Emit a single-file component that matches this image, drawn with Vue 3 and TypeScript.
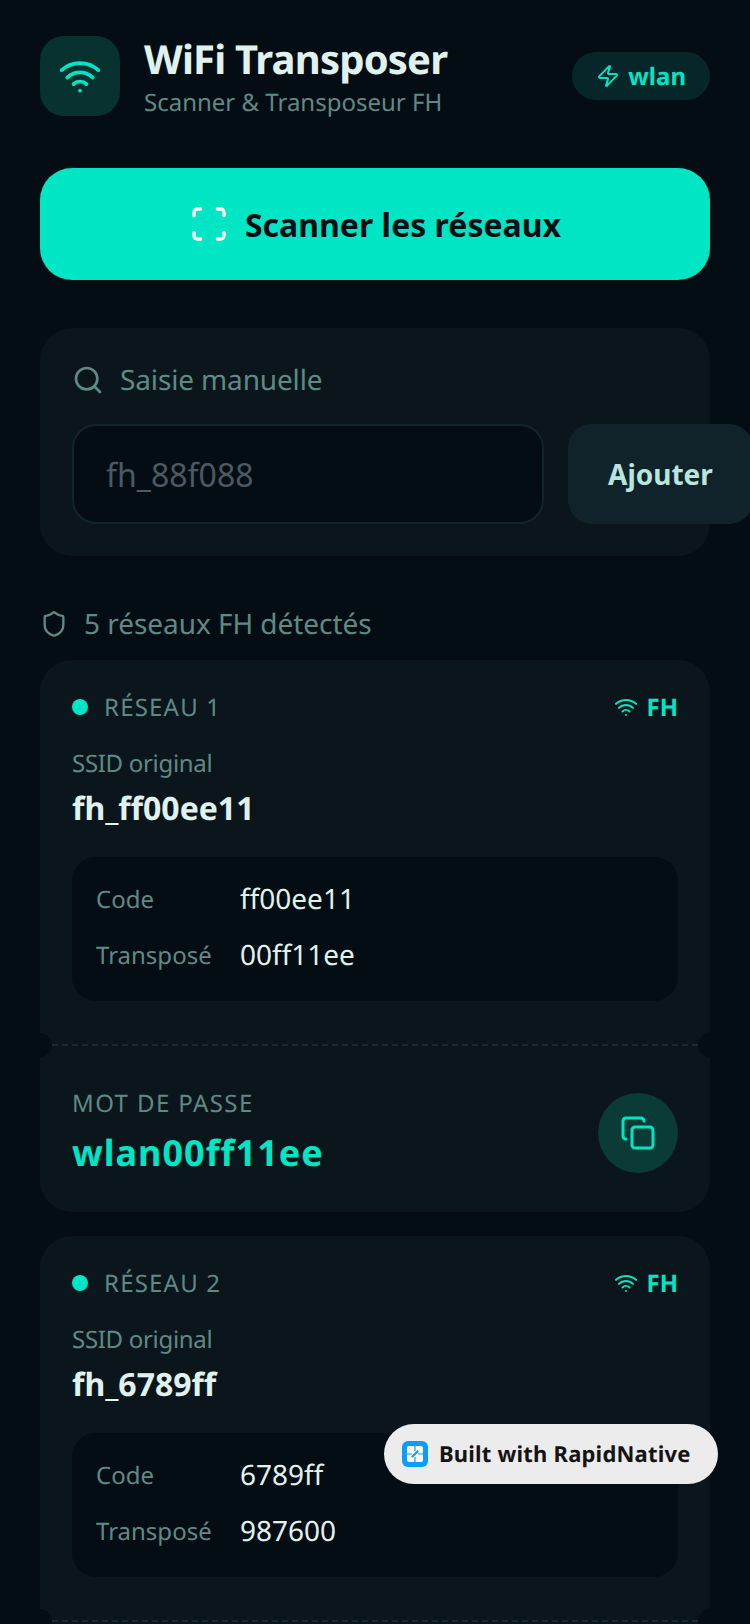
<template>
    <div class="screen">
        <header class="header">
            <div class="logo">
                <svg width="44" height="44" viewBox="0 0 24 24" fill="none" stroke="#00e5c3" stroke-width="2" stroke-linecap="round" stroke-linejoin="round">
                    <path d="M2 8.82a15 15 0 0 1 20 0" />
                    <path d="M5 12.86a10 10 0 0 1 14 0" />
                    <path d="M8.5 16.43a5 5 0 0 1 7 0" />
                    <path d="M12 20h.01" />
                </svg>
            </div>
            <div class="heading">
                <h1 class="title">WiFi Transposer</h1>
                <div class="subtitle">Scanner &amp; Transposeur FH</div>
            </div>
            <div class="prefix-badge">
                <svg width="24" height="24" viewBox="0 0 24 24" fill="none" stroke="#00e5c3" stroke-width="2" stroke-linecap="round" stroke-linejoin="round">
                    <path d="M4 14a1 1 0 0 1-.78-1.63l9.9-10.2a.5.5 0 0 1 .86.46l-1.92 6.02A1 1 0 0 0 13 10h7a1 1 0 0 1 .78 1.63l-9.9 10.2a.5.5 0 0 1-.86-.46l1.92-6.02A1 1 0 0 0 11 14z" />
                </svg>
                <span>wlan</span>
            </div>
        </header>

        <button class="scan-button">
            <svg width="40" height="40" viewBox="0 0 24 24" fill="none" stroke="#ffffff" stroke-width="2" stroke-linecap="round" stroke-linejoin="round">
                <path d="M3 7V5a2 2 0 0 1 2-2h2" />
                <path d="M17 3h2a2 2 0 0 1 2 2v2" />
                <path d="M21 17v2a2 2 0 0 1-2 2h-2" />
                <path d="M7 21H5a2 2 0 0 1-2-2v-2" />
            </svg>
            <span>Scanner les réseaux</span>
        </button>

        <section class="manual">
            <div class="manual-label">
                <svg width="32" height="32" viewBox="0 0 24 24" fill="none" stroke="#5f8a84" stroke-width="2" stroke-linecap="round" stroke-linejoin="round">
                    <path d="m21 21-4.34-4.34" />
                    <circle cx="11" cy="11" r="8" />
                </svg>
                <span>Saisie manuelle</span>
            </div>
            <div class="manual-row">
                <input class="manual-input" placeholder="fh_88f088" />
                <button class="add-button">Ajouter</button>
            </div>
        </section>

        <div class="detected">
            <svg width="28" height="28" viewBox="0 0 24 24" fill="none" stroke="#5f8a84" stroke-width="2" stroke-linecap="round" stroke-linejoin="round">
                <path d="M20 13c0 5-3.5 7.5-7.66 8.95a1 1 0 0 1-.67-.01C7.5 20.5 4 18 4 13V6a1 1 0 0 1 1-1c2 0 4.5-1.2 6.24-2.72a1.17 1.17 0 0 1 1.52 0C14.51 3.81 17 5 19 5a1 1 0 0 1 1 1z" />
            </svg>
            <span>5 réseaux FH détectés</span>
        </div>

        <article v-for="(network, index) in networks" :key="network.code" class="network">
            <div class="network-top">
                <div class="network-head">
                    <span class="dot"></span>
                    <span class="network-name">RÉSEAU {{ index + 1 }}</span>
                    <span class="fh-tag">
                        <svg width="24" height="24" viewBox="0 0 24 24" fill="none" stroke="#00e5c3" stroke-width="2" stroke-linecap="round" stroke-linejoin="round">
                            <path d="M2 8.82a15 15 0 0 1 20 0" />
                            <path d="M5 12.86a10 10 0 0 1 14 0" />
                            <path d="M8.5 16.43a5 5 0 0 1 7 0" />
                            <path d="M12 20h.01" />
                        </svg>
                        FH
                    </span>
                </div>
                <div class="ssid-label">SSID original</div>
                <div class="ssid">fh_{{ network.code }}</div>
                <div class="codes">
                    <div class="code-row">
                        <span class="code-label">Code</span>
                        <span class="code-value">{{ network.code }}</span>
                    </div>
                    <div class="code-row">
                        <span class="code-label">Transposé</span>
                        <span class="code-value">{{ network.transposed }}</span>
                    </div>
                </div>
            </div>
            <div class="separator">
                <span class="notch notch-left"></span>
                <span class="notch notch-right"></span>
            </div>
            <div class="password-row">
                <div>
                    <div class="password-label">MOT DE PASSE</div>
                    <div class="password">wlan{{ network.transposed }}</div>
                </div>
                <button class="copy-button">
                    <svg width="36" height="36" viewBox="0 0 24 24" fill="none" stroke="#00e5c3" stroke-width="2" stroke-linecap="round" stroke-linejoin="round">
                        <rect x="8" y="8" width="14" height="14" rx="2" ry="2" />
                        <path d="M4 16c-1.1 0-2-.9-2-2V4c0-1.1.9-2 2-2h10c1.1 0 2 .9 2 2" />
                    </svg>
                </button>
            </div>
        </article>

        <div class="built-with">
            <span class="built-logo">
                <svg width="16" height="16" viewBox="0 0 16 16" fill="none">
                    <rect width="16" height="16" rx="2" fill="#ffffff" />
                    <path d="M8 0v5M16 8h-5M8 16v-5M0 8h5" stroke="#0a9dff" stroke-width="1.2" />
                    <path d="M5.500 10.500l5-5" stroke="#0a9dff" stroke-width="2.200" stroke-linecap="round" />
                </svg>
            </span>
            <span>Built with RapidNative</span>
        </div>
    </div>
</template>

<script setup lang="ts">
type Network = {
    code: string;
    transposed: string;
};

const networks: Network[] = [
    { code: 'ff00ee11', transposed: '00ff11ee' },
    { code: '6789ff', transposed: '987600' },
];
</script>

<style scoped>
.screen {
    position: relative;
    width: 750px;
    height: 1624px;
    overflow: hidden;
    padding: 36px 40px 0;
    box-sizing: border-box;
    background: #050d14;
    font-family: "Noto Sans", sans-serif;
    text-rendering: geometricPrecision;
    color: #e0f2ee;
}

.header {
    display: flex;
    align-items: center;
    height: 80px;
}

.logo {
    width: 80px;
    height: 80px;
    flex: none;
    border-radius: 24px;
    background: #07322f;
    display: flex;
    align-items: center;
    justify-content: center;
}

.heading {
    margin-left: 24px;
    margin-top: 2px;
    flex: 1;
}

.title {
    margin: 0;
    font-size: 40px;
    line-height: 48px;
    font-weight: 700;
    letter-spacing: -0.8px;
    color: #e0f2ee;
}

.subtitle {
    margin-top: 4px;
    font-size: 24px;
    line-height: 32px;
    color: #5f8a84;
}

.prefix-badge {
    display: flex;
    align-items: center;
    gap: 8px;
    height: 48px;
    padding: 0 24px;
    border-radius: 24px;
    background: #07262a;
    font-size: 24px;
    font-weight: 700;
    color: #00e5c3;
}

.scan-button {
    width: 100%;
    height: 112px;
    margin-top: 52px;
    border: none;
    border-radius: 32px;
    background: #00e5c3;
    display: flex;
    align-items: center;
    justify-content: center;
    gap: 16px;
    font-family: inherit;
    font-size: 32px;
    font-weight: 700;
    color: #050d14;
}

.manual {
    margin-top: 48px;
    padding: 32px;
    border-radius: 32px;
    background: #0b161c;
}

.manual-label {
    display: flex;
    align-items: center;
    gap: 16px;
    height: 40px;
    font-size: 28px;
    letter-spacing: -0.14px;
    color: #5f8a84;
}

.manual-row {
    display: flex;
    gap: 24px;
    margin-top: 24px;
}

.manual-input {
    width: 472px;
    height: 100px;
    flex: none;
    box-sizing: border-box;
    padding: 0 32px;
    border: 2px solid #13252c;
    border-radius: 24px;
    background: #050d14;
    font-family: inherit;
    font-size: 32px;
    color: #e0f2ee;
    outline: none;
}

.manual-input::placeholder {
    color: #4a5a63;
    opacity: 1;
}

.add-button {
    height: 100px;
    flex: none;
    padding: 0 40px;
    border: none;
    border-radius: 24px;
    background: #11232a;
    font-family: inherit;
    font-size: 28px;
    font-weight: 700;
    color: #b9e5dd;
}

.detected {
    display: flex;
    align-items: center;
    gap: 16px;
    margin-top: 48px;
    height: 40px;
    font-size: 28px;
    letter-spacing: -0.05px;
    color: #5f8a84;
}

.network {
    margin-top: 16px;
    margin-bottom: 24px;
    border-radius: 32px;
    background: #0b161c;
}

.network-top {
    padding: 31px 32px 0;
}

.network-head {
    display: flex;
    align-items: center;
    height: 32px;
}

.dot {
    width: 16px;
    height: 16px;
    border-radius: 50%;
    background: #00e5c3;
}

.network-name {
    margin-left: 16px;
    flex: 1;
    font-size: 24px;
    letter-spacing: 1.2px;
    color: #5f8a84;
}

.fh-tag {
    display: flex;
    align-items: center;
    gap: 8px;
    font-size: 24px;
    font-weight: 700;
    color: #00e5c3;
}

.ssid-label {
    margin-top: 25px;
    font-size: 24px;
    line-height: 32px;
    letter-spacing: -0.3px;
    color: #5f8a84;
}

.ssid {
    margin-top: 7px;
    font-size: 32px;
    line-height: 44px;
    font-weight: 700;
    color: #e0f2ee;
}

.codes {
    margin-top: 26px;
    padding: 22px 24px 26px;
    border-radius: 24px;
    background: #050d14;
    display: flex;
    flex-direction: column;
    gap: 16px;
}

.code-row {
    display: flex;
    align-items: center;
    height: 40px;
}

.code-label {
    width: 144px;
    flex: none;
    font-size: 24px;
    color: #5f8a84;
}

.code-value {
    font-size: 28px;
    color: #e0f2ee;
}

.separator {
    position: relative;
    margin-top: 43px;
    height: 0;
    border-top: 2px dashed #1a2a31;
    margin-left: 12px;
    margin-right: 12px;
}

.notch {
    position: absolute;
    top: -13px;
    width: 24px;
    height: 24px;
    border-radius: 50%;
    background: #050d14;
}

.notch-left {
    left: -24px;
}

.notch-right {
    right: -24px;
}

.password-row {
    display: flex;
    align-items: center;
    justify-content: space-between;
    padding: 42px 32px 35px;
}

.password-label {
    font-size: 24px;
    line-height: 32px;
    letter-spacing: 1.4px;
    color: #5f8a84;
}

.password {
    margin-top: 9px;
    font-size: 36px;
    line-height: 48px;
    font-weight: 700;
    letter-spacing: 1px;
    color: #00e5c3;
}

.copy-button {
    width: 80px;
    height: 80px;
    border: none;
    border-radius: 50%;
    background: #0a3b37;
    display: flex;
    align-items: center;
    justify-content: center;
}

.built-with {
    position: absolute;
    left: 384px;
    top: 1424px;
    width: 334px;
    height: 60px;
    box-sizing: border-box;
    padding-left: 18px;
    border-radius: 30px;
    background: #ececec;
    display: flex;
    align-items: center;
    gap: 11px;
    font-size: 22px;
    font-weight: 700;
    letter-spacing: 0.2px;
    color: #141414;
}

.built-logo {
    width: 26px;
    height: 26px;
    border-radius: 6px;
    background: #0a9dff;
    display: flex;
    align-items: center;
    justify-content: center;
}
</style>

<style>
html,
body {
    margin: 0;
    overflow: hidden;
    background: #050d14;
}
</style>
